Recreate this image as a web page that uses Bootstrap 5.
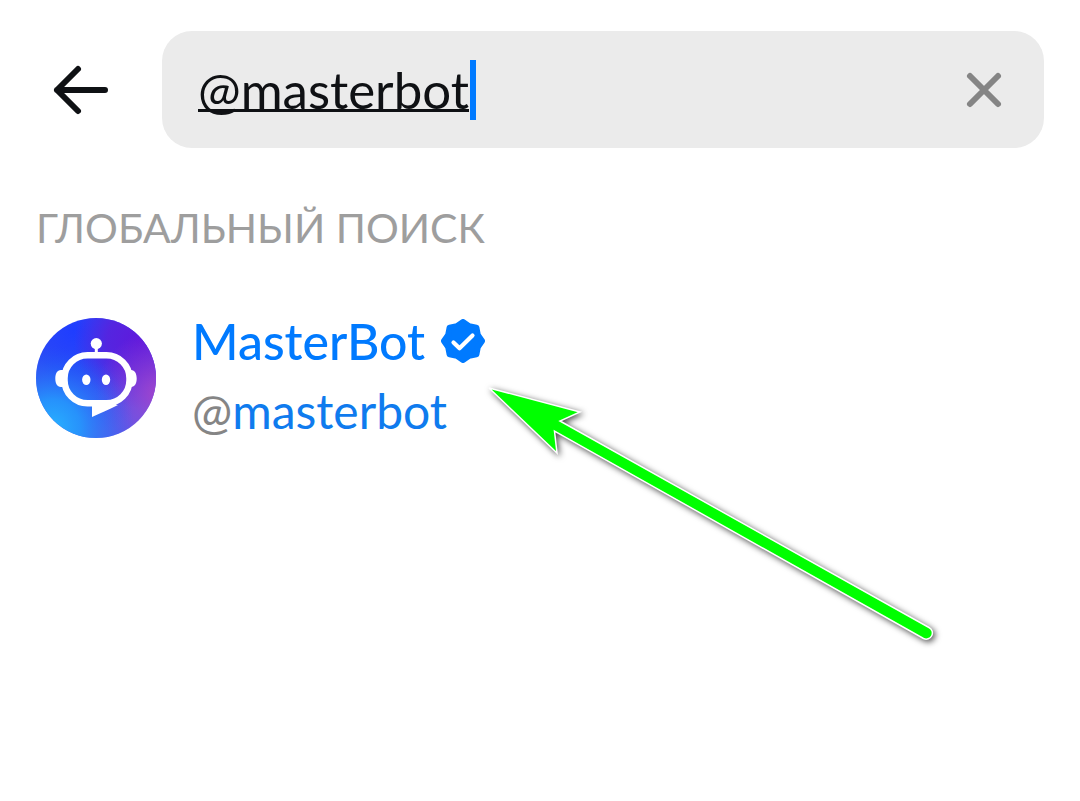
<!DOCTYPE html>
<html lang="ru">
<head>
<meta charset="utf-8">
<meta name="viewport" content="width=device-width, initial-scale=1">
<title>Поиск</title>
<link href="https://cdn.jsdelivr.net/npm/bootstrap@5.3.0/dist/css/bootstrap.min.css" rel="stylesheet">
<style>
  body { font-family: Lato, "Open Sans", sans-serif; background: #fff; color: #0f1114; }
  .page-pad { padding: 31px 36px; }
  .search-row { gap: 36px; }
  .back-btn { width: 90px; height: 117px; }
  .search-box { height: 117px; border-radius: 30px; background: #ebebeb; padding: 0 36px; }
  .search-field { width: 272px; height: 60px; font-size: 51px; line-height: 60px; color: #0f1114; outline: 0;
    text-decoration: underline; text-decoration-thickness: 3px; text-underline-offset: 0; text-decoration-skip-ink: none; caret-color: transparent; }
  .field-caret { width: 6px; height: 60px; background: #007aff; }
  .clear-btn { width: 48px; height: 48px; }
  .section-title { font-size: 41px; line-height: 48px; color: #9e9e9e; margin: 56px 0 59px; }
  .result { gap: 36px; color: #007aff; }
  .result-text { gap: 10px; padding-bottom: 4px; }
  .result-name { gap: 16px; font-size: 50px; line-height: 60px; font-weight: 500; }
  .result-handle { font-size: 48px; line-height: 60px; color: #0f7bee; }
  .at-sign { color: #858585; }
  .pointer { left: 480px; top: 380px; pointer-events: none; filter: drop-shadow(2px 2px 3px rgba(0,0,0,.7)); }
</style>
</head>
<body class="position-relative min-vh-100">
<main class="page-pad">
  <form class="search-row d-flex align-items-center" onsubmit="return false">
    <button type="button" class="back-btn btn border-0 p-0 flex-shrink-0" aria-label="Назад">
      <svg width="60" height="60" viewBox="0 0 60 60" fill="none" stroke="#0f1114" stroke-width="6" stroke-linecap="round" stroke-linejoin="round"><path d="M54 30H6M27 9 6 30l21 21"/></svg>
    </button>
    <div class="search-box d-flex align-items-center flex-grow-1">
      <input class="search-field border-0 bg-transparent p-0" type="text" value="@masterbot" aria-label="Поиск" spellcheck="false">
      <span class="field-caret"></span>
      <button type="button" class="clear-btn btn border-0 p-0 ms-auto d-flex align-items-center justify-content-center" aria-label="Очистить">
        <svg width="48" height="48" viewBox="0 0 48 48" fill="none" stroke="#858585" stroke-width="6" stroke-linecap="round"><path d="M10 10l28 28M38 10 10 38"/></svg>
      </button>
    </div>
  </form>
  <h2 class="section-title fw-normal">ГЛОБАЛЬНЫЙ ПОИСК</h2>
  <a href="#" class="result d-flex align-items-center text-decoration-none">
    <svg class="flex-shrink-0" width="120" height="120" viewBox="0 0 120 120" aria-hidden="true">
      <defs>
        <radialGradient id="base" gradientUnits="userSpaceOnUse" cx="38" cy="12" r="105"><stop offset="0" stop-color="#1f3dff"/><stop offset=".4" stop-color="#2a48f6"/><stop offset="1" stop-color="#5a5cea"/></radialGradient>
        <radialGradient id="violet" gradientUnits="userSpaceOnUse" cx="104" cy="24" r="66"><stop offset="0" stop-color="#5f18dc"/><stop offset=".5" stop-color="#5c1fdc" stop-opacity=".85"/><stop offset="1" stop-color="#5c1fdc" stop-opacity="0"/></radialGradient>
        <radialGradient id="pink" gradientUnits="userSpaceOnUse" cx="124" cy="76" r="64"><stop offset="0" stop-color="#a444cc"/><stop offset="1" stop-color="#9040d4" stop-opacity="0"/></radialGradient>
        <radialGradient id="cyan" gradientUnits="userSpaceOnUse" cx="16" cy="110" r="82"><stop offset="0" stop-color="#27b2ff"/><stop offset=".35" stop-color="#2398fd" stop-opacity=".9"/><stop offset="1" stop-color="#1c5cf8" stop-opacity="0"/></radialGradient>
      </defs>
      <circle cx="60" cy="60" r="60" fill="url(#base)"/>
      <circle cx="60" cy="60" r="60" fill="url(#violet)"/>
      <circle cx="60" cy="60" r="60" fill="url(#pink)"/>
      <circle cx="60" cy="60" r="60" fill="url(#cyan)"/>
      <rect x="28.500" y="37.300" width="65" height="48" rx="23" fill="none" stroke="#fff" stroke-width="6.500"/>
      <path fill="#fff" d="M29 52h-4c-4 0-5.700 4-5.700 8.500S21 69 25 69h4zM92 52h3c4 0 5.700 4 5.700 8.500S99 69 95 69h-3zM56 86v13c8-4 16-7 26-12z"/>
      <path d="M60.300 26v10" stroke="#fff" stroke-width="3"/>
      <circle cx="60.300" cy="25.600" r="5.600" fill="#fff"/>
      <ellipse cx="50.300" cy="61.700" rx="4.200" ry="5.200" fill="#fff"/>
      <ellipse cx="70" cy="61.700" rx="4.200" ry="5.200" fill="#fff"/>
    </svg>
    <span class="result-text d-flex flex-column">
      <span class="result-name d-flex align-items-center">MasterBot
        <svg width="44" height="44" viewBox="0 0 44 44" role="img" aria-label="Подтверждён"><path fill="#007aff" stroke="#007aff" stroke-width="6" stroke-linejoin="round" d="M41 22 36.800 28.100 35.400 35.400 28.100 36.800 22 41 15.900 36.800 8.600 35.400 7.200 28.100 3 22 7.200 15.900 8.600 8.600 15.900 7.200 22 3 28.100 7.200 35.400 8.600 36.800 15.900z"/><path d="M12.500 23.500 18.500 29.300 31.500 16.500" fill="none" stroke="#fff" stroke-width="4.200" stroke-linecap="round" stroke-linejoin="round"/></svg>
      </span>
      <span class="result-handle"><span class="at-sign">@</span>masterbot</span>
    </span>
  </a>
</main>
<svg class="pointer position-absolute" width="470" height="280" viewBox="480 380 470 280" aria-hidden="true">
  <path d="M489 388 580 412 560 421 929 627.500A6 6 0 0 1 923.500 638.500L554.500 431 557 453Z" fill="#0f0" stroke="#fff" stroke-width="1.500"/>
</svg>
<script src="https://cdn.jsdelivr.net/npm/bootstrap@5.3.0/dist/js/bootstrap.bundle.min.js"></script>
</body>
</html>
